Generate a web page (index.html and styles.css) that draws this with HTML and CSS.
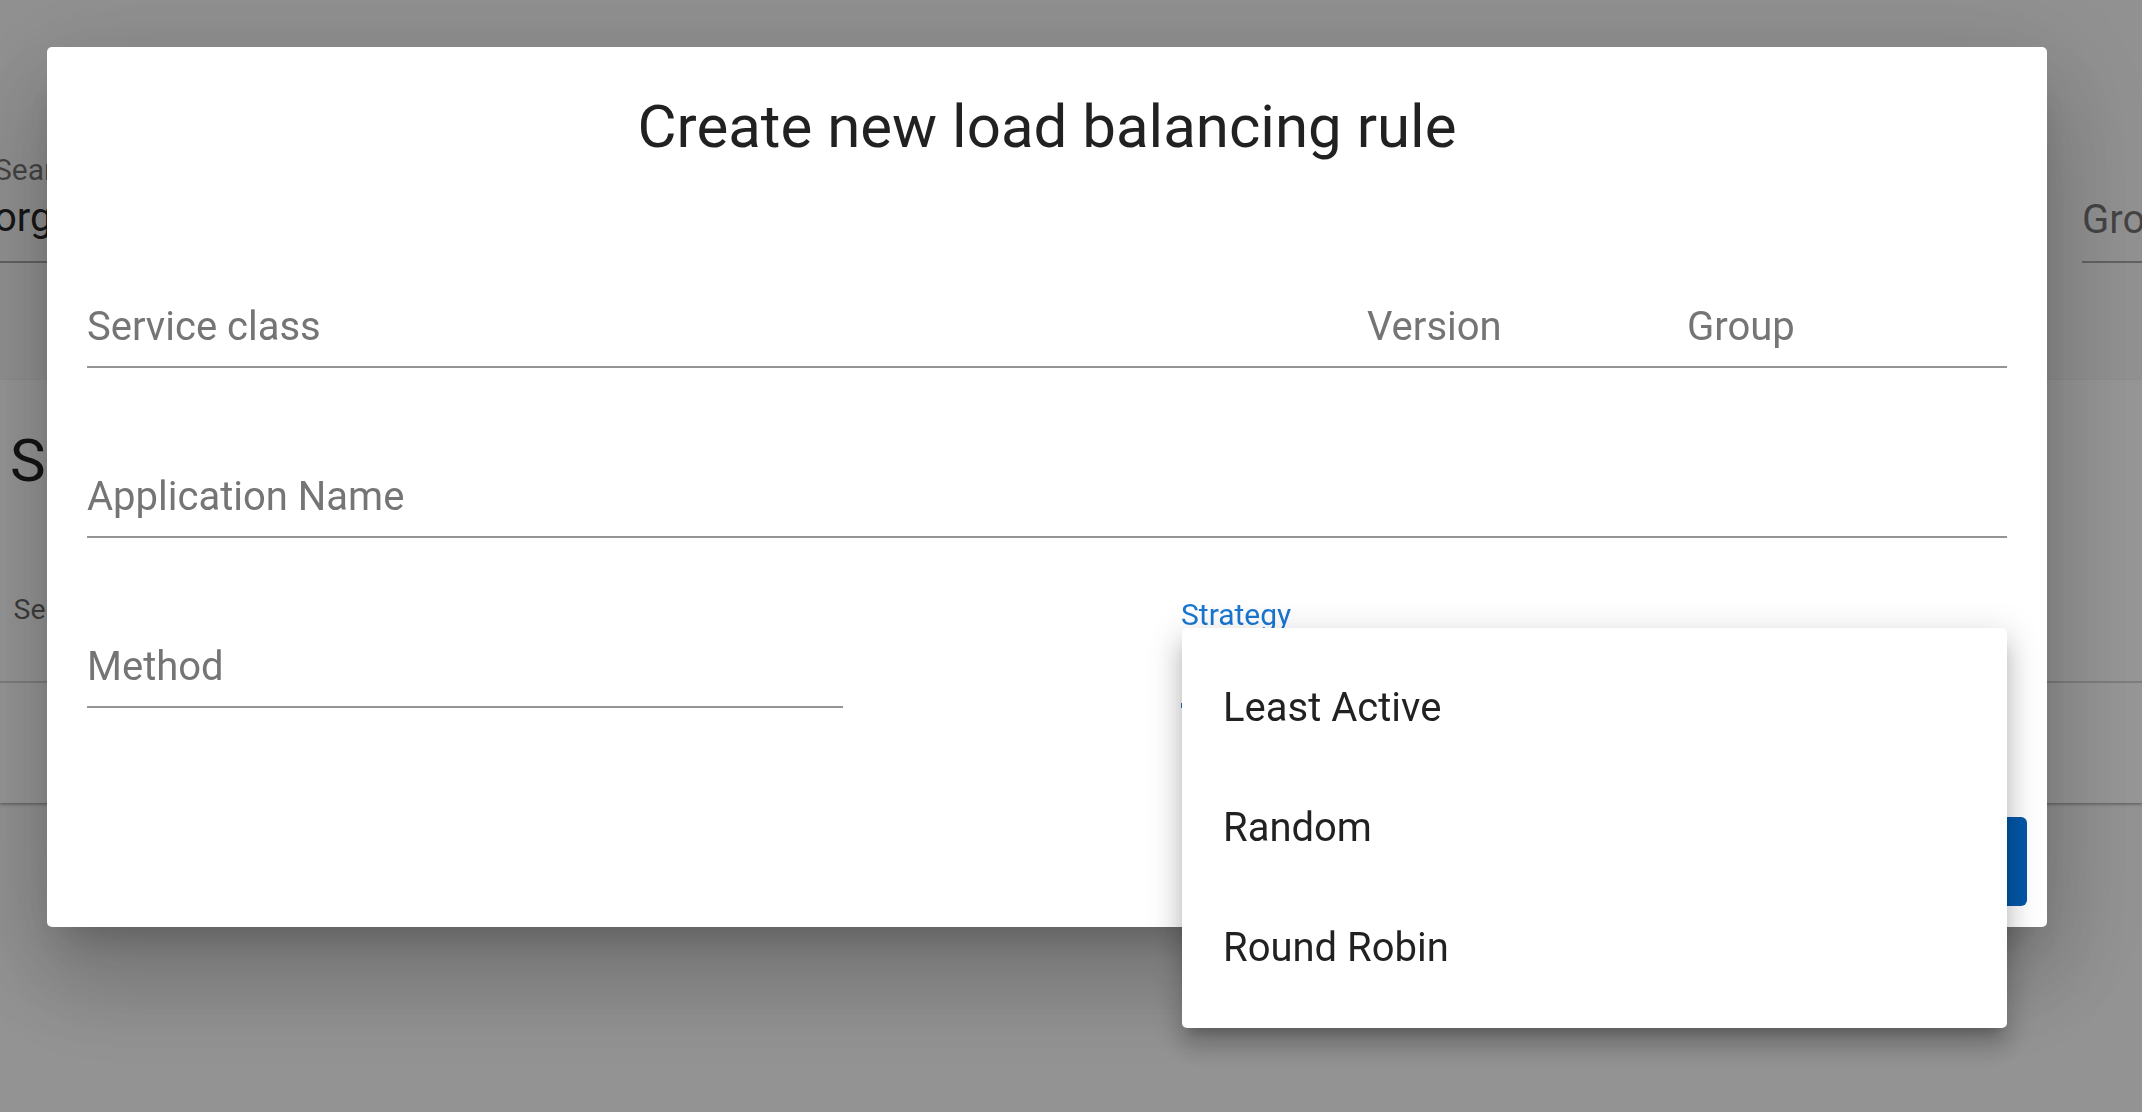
FILE: index.html
```html
<!DOCTYPE html>
<html lang="en">
<head>
<meta charset="utf-8">
<title>Create new load balancing rule</title>
<link rel="stylesheet" href="styles.css">
</head>
<body>
  <div class="page">
    <header class="toolbar">
      <div class="search-field">
        <div class="search-label">Search Service</div>
        <div class="search-value">org.apache.dubbo.demo.DemoService</div>
      </div>
      <div class="group-field">
        <div class="group-placeholder">Group</div>
      </div>
    </header>
    <section class="card">
      <h2 class="card-title">Search Result</h2>
      <div class="table-head">
        <span class="th">Service Name</span>
      </div>
    </section>
  </div>

  <div class="backdrop"></div>

  <div class="dialog" role="dialog">
    <h1 class="dialog-title">Create new load balancing rule</h1>
    <div class="dialog-content">
      <div class="row row-service">
        <div class="field"><span class="field-label">Service class</span></div>
        <div class="field"><span class="field-label">Version</span></div>
        <div class="field"><span class="field-label">Group</span></div>
      </div>
      <div class="row row-app">
        <div class="field"><span class="field-label">Application Name</span></div>
      </div>
      <div class="row row-method">
        <div class="field field-method"><span class="field-label">Method</span></div>
        <div class="field field-strategy">
          <span class="shrunk-label">Strategy</span>
          <span class="field-label">&nbsp;</span>
        </div>
      </div>
    </div>
    <div class="dialog-actions">
      <button class="btn btn-text">Cancel</button>
      <button class="btn btn-primary">Save</button>
    </div>
  </div>

  <ul class="menu" role="listbox">
    <li class="menu-item">Least Active</li>
    <li class="menu-item">Random</li>
    <li class="menu-item">Round Robin</li>
  </ul>
</body>
</html>
```

FILE: styles.css
```css
* {
  box-sizing: border-box;
}

html, body {
  margin: 0;
  padding: 0;
  width: 2142px;
  height: 1112px;
  overflow: hidden;
}

body {
  font-family: Roboto, "Noto Sans", "Liberation Sans", sans-serif;
  background: #fafafa;
  color: rgba(0, 0, 0, 0.87);
}

/* ---------- background page ---------- */
.page {
  width: 100%;
}

.toolbar {
  height: 380px;
  background: #f7f7f7;
  display: flex;
  align-items: flex-end;
  padding-bottom: 117px;
}

.search-field {
  margin-left: -6px;
  width: 1100px;
  border-bottom: 2px solid rgba(0, 0, 0, 0.32);
  padding-bottom: 23px;
}

.search-label {
  font-size: 30px;
  line-height: 30px;
  color: rgba(0, 0, 0, 0.54);
}

.search-value {
  margin-top: 13.5px;
  font-size: 40px;
  line-height: 40px;
  white-space: nowrap;
  color: rgba(0, 0, 0, 0.87);
}

.group-field {
  margin-left: auto;
  width: 60px;
  border-bottom: 2px solid rgba(0, 0, 0, 0.32);
  padding-bottom: 21px;
}

.group-placeholder {
  font-size: 40px;
  line-height: 40px;
  color: rgba(0, 0, 0, 0.54);
  white-space: nowrap;
}

.card {
  height: 423px;
  background: #ffffff;
  padding: 50.5px 0 0 10px;
  box-shadow: 0 2px 3px rgba(0, 0, 0, 0.22), 0 1px 2px rgba(0, 0, 0, 0.14);
}

.card-title {
  margin: 0;
  font-size: 60px;
  line-height: 60px;
  font-weight: 400;
  color: rgba(0, 0, 0, 0.87);
}

.table-head {
  margin: 105.9px 0 0 -10px;
  padding: 0 0 56.6px 13.5px;
  border-bottom: 2px solid rgba(0, 0, 0, 0.16);
}

.th {
  font-size: 28.5px;
  line-height: 28px;
  color: rgba(0, 0, 0, 0.6);
}

/* ---------- backdrop ---------- */
.backdrop {
  position: fixed;
  inset: 0;
  background: rgba(0, 0, 0, 0.41);
}

/* ---------- dialog ---------- */
.dialog {
  position: fixed;
  left: 47px;
  top: 47px;
  width: 2000px;
  height: 880px;
  background: #ffffff;
  border-radius: 5px;
  display: flex;
  flex-direction: column;
  box-shadow:
    0 26px 36px -17px rgba(0, 0, 0, 0.2),
    0 58px 91px 7px rgba(0, 0, 0, 0.14),
    0 22px 110px 19px rgba(0, 0, 0, 0.12);
}

.dialog-title {
  margin: 0;
  padding-top: 40.2px;
  font-size: 60px;
  line-height: 80px;
  font-weight: 400;
  text-align: center;
  color: rgba(0, 0, 0, 0.87);
}

.dialog-content {
  padding: 99.1px 40px 0;
}

.row-service {
  display: grid;
  grid-template-columns: 4fr 1fr 1fr;
}

.row-app,
.row-method {
  margin-top: 68.3px;
}

.row-method {
  display: flex;
  justify-content: space-between;
}

.field {
  position: relative;
  padding: 41px 0 18.7px;
  border-bottom: 2px solid #949494;
}

.field-label {
  display: block;
  font-size: 40px;
  line-height: 40px;
  color: #757575;
  white-space: nowrap;
}

.field-method {
  width: 756px;
}

.field-strategy {
  width: 826px;
}

.field-strategy::after {
  content: "";
  position: absolute;
  left: 0;
  right: 0;
  bottom: -2px;
  height: 5px;
  background: #1976d2;
}

.shrunk-label {
  position: absolute;
  left: 0;
  top: -6.5px;
  font-size: 30px;
  line-height: 30px;
  color: #1976d2;
}

.dialog-actions {
  margin-top: auto;
  display: flex;
  justify-content: flex-end;
  gap: 19px;
  padding: 0 20px 21px;
}

.btn {
  height: 89px;
  padding: 0 38px;
  border: 0;
  border-radius: 6px;
  font-family: inherit;
  font-size: 35px;
  font-weight: 500;
  letter-spacing: 1px;
  text-transform: uppercase;
}

.btn-text {
  background: transparent;
  color: #1976d2;
}

.btn-primary {
  background: #0358a9;
  color: #ffffff;
}

/* ---------- select menu ---------- */
.menu {
  position: fixed;
  left: 1182px;
  top: 628px;
  width: 825px;
  margin: 0;
  padding: 20px 0;
  list-style: none;
  background: #ffffff;
  border-radius: 5px;
  box-shadow:
    0 12px 12px -7px rgba(0, 0, 0, 0.2),
    0 19px 24px 2px rgba(0, 0, 0, 0.14),
    0 7px 34px 5px rgba(0, 0, 0, 0.12);
}

.menu-item {
  height: 120px;
  display: flex;
  align-items: center;
  padding-left: 41px;
  font-size: 40px;
  line-height: 60px;
  color: rgba(0, 0, 0, 0.87);
}
```
